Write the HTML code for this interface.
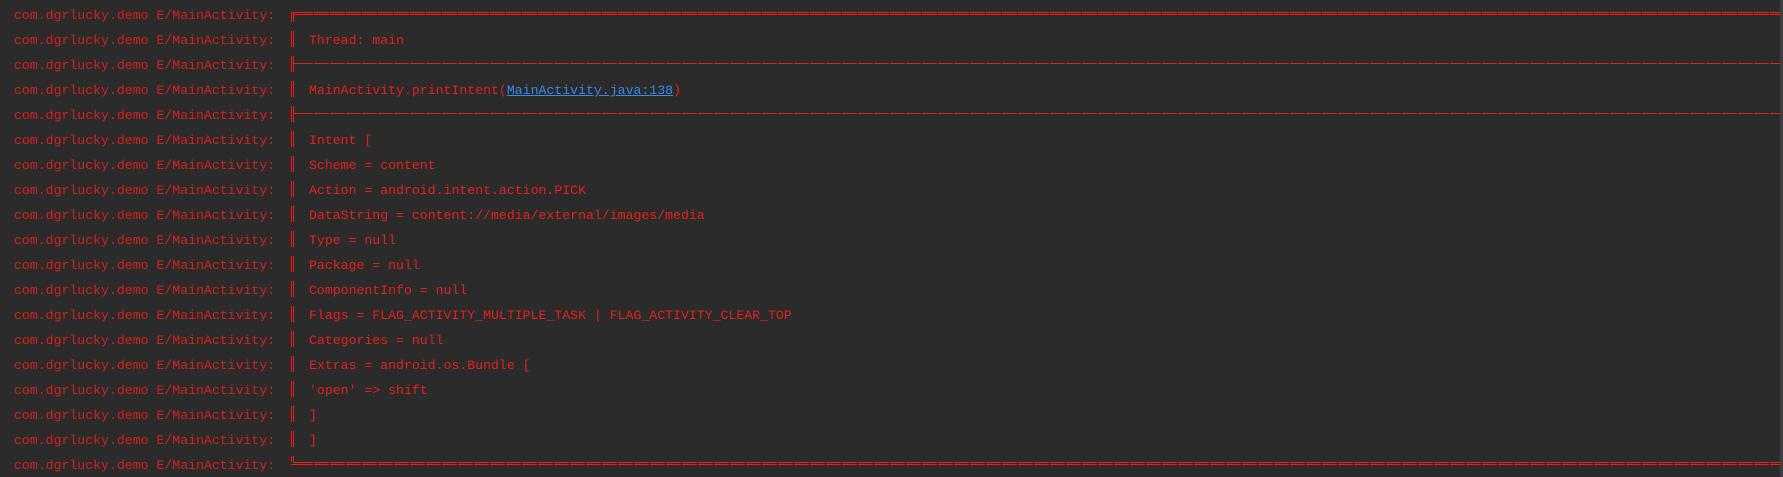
<!DOCTYPE html>
<html><head><meta charset="utf-8"><style>
html,body{margin:0;padding:0;width:1783px;height:477px;overflow:hidden;background:#2b2b2b;position:relative}
.r{position:absolute;left:14px;height:25px;line-height:25px;font-family:"Liberation Mono","Noto Sans CJK SC",monospace;font-size:13.2px;color:#d8201a;white-space:pre}
.c{position:absolute;left:309px;height:25px;line-height:25px;font-family:"Liberation Mono","Noto Sans CJK SC",monospace;font-size:13.2px;color:#e8201a;white-space:pre}
a{color:#3a8ae8;text-decoration:underline}
.v{position:absolute;left:291px;width:1px;border-left:1px solid #f21a10;border-right:1px solid #f21a10;width:1px;height:16px}
.dd{position:absolute;left:298px;width:1482px;height:3px;background:
 repeating-linear-gradient(90deg,#ff1a10 0 15px,transparent 15px 16px);}
.dd::after{content:"";position:absolute;left:0;right:0;top:1px;height:1px;background:#2b2b2b}
.sd{position:absolute;left:298px;width:1482px;height:1px;background:repeating-linear-gradient(90deg,#e8201a 0 15px,transparent 15px 16px)}
.sb{position:absolute;left:1780px;top:0;width:3px;height:477px;background:#3c3f41}
</style></head><body>
<div class="sb"></div>
<div class="r" style="top:3px">com.dgrlucky.demo E/MainActivity:</div>
<div class="r" style="top:28px">com.dgrlucky.demo E/MainActivity:</div>
<div class="r" style="top:53px">com.dgrlucky.demo E/MainActivity:</div>
<div class="r" style="top:78px">com.dgrlucky.demo E/MainActivity:</div>
<div class="r" style="top:103px">com.dgrlucky.demo E/MainActivity:</div>
<div class="r" style="top:128px">com.dgrlucky.demo E/MainActivity:</div>
<div class="r" style="top:153px">com.dgrlucky.demo E/MainActivity:</div>
<div class="r" style="top:178px">com.dgrlucky.demo E/MainActivity:</div>
<div class="r" style="top:203px">com.dgrlucky.demo E/MainActivity:</div>
<div class="r" style="top:228px">com.dgrlucky.demo E/MainActivity:</div>
<div class="r" style="top:253px">com.dgrlucky.demo E/MainActivity:</div>
<div class="r" style="top:278px">com.dgrlucky.demo E/MainActivity:</div>
<div class="r" style="top:303px">com.dgrlucky.demo E/MainActivity:</div>
<div class="r" style="top:328px">com.dgrlucky.demo E/MainActivity:</div>
<div class="r" style="top:353px">com.dgrlucky.demo E/MainActivity:</div>
<div class="r" style="top:378px">com.dgrlucky.demo E/MainActivity:</div>
<div class="r" style="top:403px">com.dgrlucky.demo E/MainActivity:</div>
<div class="r" style="top:428px">com.dgrlucky.demo E/MainActivity:</div>
<div class="r" style="top:453px">com.dgrlucky.demo E/MainActivity:</div>

<div class="c" style="top:28px">Thread: main</div>
<div class="c" style="top:78px">MainActivity.printIntent(<a>MainActivity.java:138</a>)</div>
<div class="c" style="top:128px">Intent [</div>
<div class="c" style="top:153px">Scheme = content</div>
<div class="c" style="top:178px">Action = android.intent.action.PICK</div>
<div class="c" style="top:203px">DataString = content://media/external/images/media</div>
<div class="c" style="top:228px">Type = null</div>
<div class="c" style="top:253px">Package = null</div>
<div class="c" style="top:278px">ComponentInfo = null</div>
<div class="c" style="top:303px">Flags = FLAG_ACTIVITY_MULTIPLE_TASK | FLAG_ACTIVITY_CLEAR_TOP</div>
<div class="c" style="top:328px">Categories = null</div>
<div class="c" style="top:353px">Extras = android.os.Bundle [</div>
<div class="c" style="top:378px">'open' =&gt; shift</div>
<div class="c" style="top:403px">]</div>
<div class="c" style="top:428px">]</div>

<!-- top corner -->
<div class="v" style="top:12px;height:10px"></div>
<div style="position:absolute;left:291px;top:12px;width:7px;height:1px;background:#f21a10"></div>
<div style="position:absolute;left:293px;top:14px;width:5px;height:1px;background:#f21a10"></div>
<div class="dd" style="top:12px"></div>
<!-- verticals -->
<div class="v" style="top:31px"></div>
<div class="v" style="top:56px"></div>
<div class="v" style="top:81px"></div>
<div class="v" style="top:106px"></div>
<div class="v" style="top:131px"></div><div class="v" style="top:156px"></div><div class="v" style="top:181px"></div>
<div class="v" style="top:206px"></div><div class="v" style="top:231px"></div><div class="v" style="top:256px"></div>
<div class="v" style="top:281px"></div><div class="v" style="top:306px"></div><div class="v" style="top:331px"></div>
<div class="v" style="top:356px"></div><div class="v" style="top:381px"></div><div class="v" style="top:406px"></div>
<div class="v" style="top:431px"></div>
<div class="v" style="top:456px;height:6px"></div>
<div style="position:absolute;left:294px;top:63px;width:4px;height:1px;background:#e8201a"></div>
<div class="sd" style="top:63px"></div>
<div style="position:absolute;left:294px;top:113px;width:4px;height:1px;background:#e8201a"></div>
<div class="sd" style="top:113px"></div>
<!-- bottom corner -->
<div style="position:absolute;left:291px;top:464px;width:7px;height:1px;background:#f21a10"></div>
<div style="position:absolute;left:293px;top:462px;width:5px;height:1px;background:#f21a10"></div>
<div class="dd" style="top:462px"></div>
</body></html>
